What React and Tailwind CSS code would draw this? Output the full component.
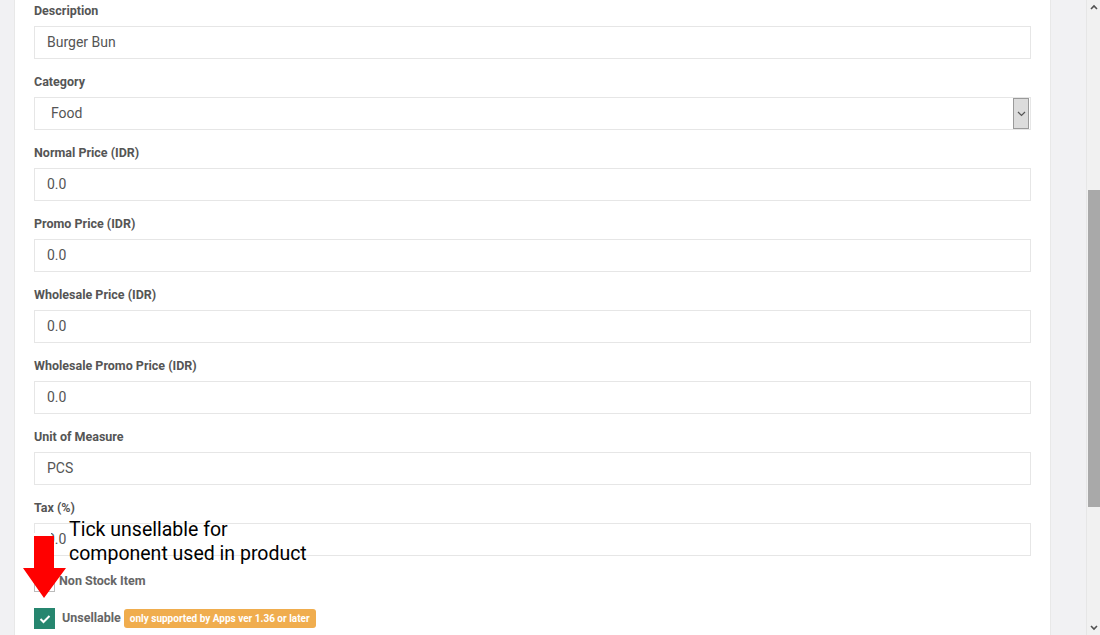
import React from "react";

const fields = [
  { label: "Description", value: "Burger Bun" },
  { label: "Category", value: "Food", select: true },
  { label: "Normal Price (IDR)", value: "0.0" },
  { label: "Promo Price (IDR)", value: "0.0" },
  { label: "Wholesale Price (IDR)", value: "0.0" },
  { label: "Wholesale Promo Price (IDR)", value: "0.0" },
  { label: "Unit of Measure", value: "PCS" },
  { label: "Tax (%)", value: "0.0" },
];

function Field({ label, value, select }) {
  return (
    <div className="flex flex-col mb-[15px]">
      <div className="h-[17px] text-[12.5px] leading-[16px] font-bold text-[#555]">{label}</div>
      <div className="mt-[6px] h-[33px] border border-[#e6e6e6] bg-white flex items-center relative">
        <span className={`${select ? "pl-[16px]" : "pl-[12px]"} text-[14px] text-[#555]`}>{value}</span>
        {select && (
          <div className="absolute right-[1px] top-[0px] h-[31px] w-[16px] bg-[#dcdcdc] border border-[#9a9a9a] flex items-center justify-center">
            <svg width="9" height="6" viewBox="0 0 9 6" fill="none">
              <path d="M1 1l3.5 3.5L8 1" stroke="#555" strokeWidth="1.2" />
            </svg>
          </div>
        )}
      </div>
    </div>
  );
}

export default function App() {
  return (
    <div className="w-[1100px] h-[635px] overflow-hidden flex bg-[#f1f1f3]" style={{ fontFamily: "Roboto, 'Liberation Sans', sans-serif" }}>
      <div className="w-[14px] shrink-0 bg-[#f1f1f3]" />
      <div className="w-[1037px] shrink-0 bg-white border-l border-r border-[#e8e8e8] px-[19px] pt-[3px] relative">
        {fields.map((f) => (
          <Field key={f.label} {...f} />
        ))}
        <div className="flex items-center h-[21px] mt-[0px]">
          <div className="w-[21px] h-[21px] border border-[#bbb] bg-white" />
          <span className="ml-[4px] text-[12.5px] font-bold text-[#666]">Non Stock Item</span>
        </div>
        <div className="flex items-center h-[21px] mt-[16px]">
          <div className="w-[21px] h-[21px] bg-[#26866f] flex items-center justify-center">
            <svg width="12" height="10" viewBox="0 0 12 10" fill="none">
              <path d="M1.5 5l3 3 6-6" stroke="white" strokeWidth="2" />
            </svg>
          </div>
          <span className="ml-[7px] text-[12.5px] font-bold text-[#666]">Unsellable</span>
          <span className="ml-[3px] h-[19px] px-[6px] rounded-[3px] bg-[#f0ad4e] text-white text-[10px] font-bold flex items-center">
            only supported by Apps ver 1.36 or later
          </span>
        </div>

        {/* annotation */}
        <div className="absolute left-[54px] top-[518px] text-[19.5px] leading-[24px] text-black" style={{ fontFamily: "Roboto, 'Liberation Sans', sans-serif" }}>
          <div>Tick unsellable for</div>
          <div>component used in product</div>
        </div>
        <svg className="absolute left-[7px] top-[533px]" width="46" height="67" viewBox="0 0 46 67">
          <rect x="11" y="0" width="18" height="5" fill="white" />
          <polygon points="12,3 32,3 32,35 44,35 22,65 1,35 12,35" fill="#f00" />
        </svg>
      </div>
      <div className="flex-1 bg-[#f1f1f3]" />
      <div className="w-[14px] shrink-0 bg-[#f1f1f1] flex flex-col items-center border-l border-[#e6e6e6]">
        <div className="h-[14px] flex items-center justify-center">
          <svg width="8" height="6" viewBox="0 0 8 6"><path d="M1 5l3-3 3 3" stroke="#505050" strokeWidth="1.6" fill="none" /></svg>
        </div>
        <div className="mt-[176px] w-[12px] h-[317px] bg-[#a9a9a9]" />
        <div className="flex-1" />
        <div className="h-[14px] flex items-center justify-center">
          <svg width="8" height="6" viewBox="0 0 8 6"><path d="M1 1l3 3 3-3" stroke="#505050" strokeWidth="1.6" fill="none" /></svg>
        </div>
      </div>
    </div>
  );
}
